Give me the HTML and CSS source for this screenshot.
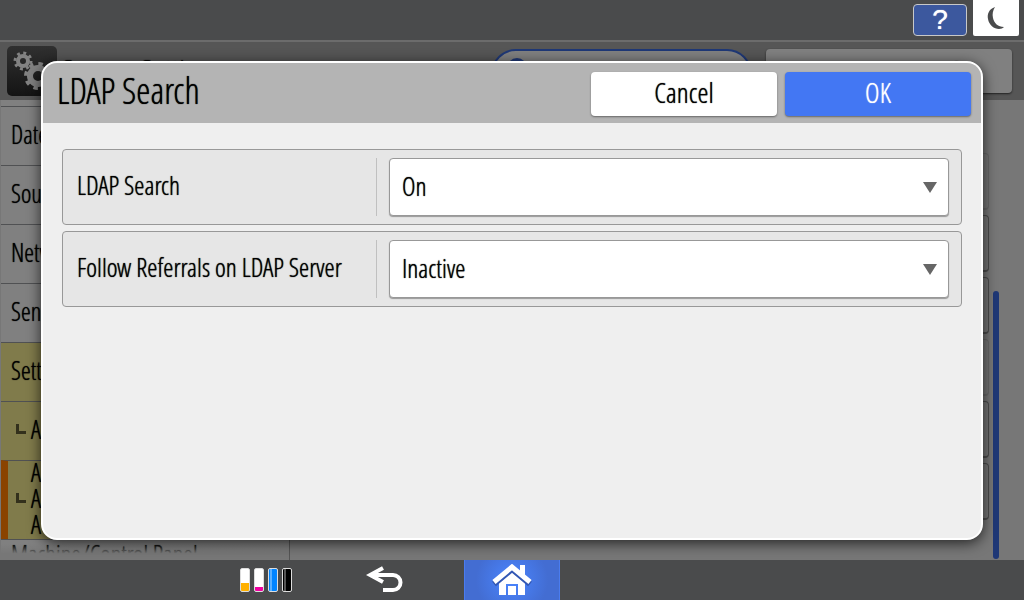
FILE: index.html
```html
<!DOCTYPE html>
<html lang="en">
<head>
    <meta charset="UTF-8">
    <meta name="viewport" content="width=device-width, initial-scale=1.0">
    <title>LDAP Search</title>
    <link rel="stylesheet" href="styles.css">
</head>
<body>
    <header class="topbar">
        <button class="help" type="button" aria-label="Help">?</button>
        <button class="sleep" type="button" aria-label="Sleep">
            <svg width="18" height="24" viewBox="0 0 18 24"><path d="M8 1C2 3 0 8 1 13c1 6 6 10 11 10 2 0 4-1 5-2C11 21 7 17 6 12 5 8 6 4 8 1z" fill="#4a4b4c"/></svg>
        </button>
    </header>

    <!-- Settings screen, dimmed behind the dialog -->
    <div class="screen">
        <div class="screen-head">
            <span class="app-icon">
                <svg width="50" height="50" viewBox="0 0 50 50">
                    <g fill="none" stroke="#828282">
                        <circle cx="16" cy="15" r="5" stroke-width="4"/>
                        <circle cx="16" cy="15" r="8" stroke-width="3" stroke-dasharray="2.900 3.383"/>
                        <circle cx="31" cy="30" r="8" stroke-width="6"/>
                        <circle cx="31" cy="30" r="12" stroke-width="4" stroke-dasharray="4.400 5.025"/>
                    </g>
                </svg>
            </span>
            <h2 class="app-title">System Settings</h2>
            <div class="search">
                <svg width="24" height="24" viewBox="0 0 24 24"><circle cx="11" cy="10" r="8" fill="none" stroke="#1f3876" stroke-width="4"/></svg>
            </div>
            <button class="head-button" type="button">Machine Code Info</button>
        </div>
        <div class="screen-body">
            <nav class="menu">
                <a class="item" href="#">Date</a>
                <a class="item" href="#">Sound</a>
                <a class="item" href="#">Network</a>
                <a class="item" href="#">Send</a>
                <a class="item open" href="#">Settings</a>
                <a class="item open sub" href="#">A</a>
                <a class="item open sub current" href="#">A<br>A<br>A</a>
                <a class="item last" href="#">Machine/Control Panel</a>
            </nav>
            <div class="options">
                <div class="option faint"></div>
                <div class="option"></div>
                <div class="option"></div>
                <div class="option faint"></div>
                <div class="option"></div>
                <div class="option"></div>
            </div>
            <div class="scrollbar"></div>
        </div>
    </div>

    <footer class="navbar">
        <div class="nav-left">
            <div class="toners">
                <span class="toner yellow"></span>
                <span class="toner magenta"></span>
                <span class="toner cyan"></span>
                <span class="toner black"></span>
            </div>
            <button class="back" type="button" aria-label="Back">
                <svg width="37" height="28" viewBox="0 0 37 28"><path d="M4 9h23a7 7 0 0 1 0 15H17M17 2L4 9l13 7" fill="none" stroke="#fff" stroke-width="4"/></svg>
            </button>
        </div>
        <button class="home" type="button" aria-label="Home">
            <svg width="40" height="32" viewBox="0 0 40 32">
                <path d="M28 1h5v14h-5z" fill="#fff"/>
                <path d="M20 8l13 11v12h-7V20H14v11H7V19z" fill="#fff"/>
                <path d="M16 22h8v9h-8z" fill="#fff"/>
                <path d="M2 20L20 5l18 15" fill="none" stroke="#3358b4" stroke-width="6"/>
                <path d="M2 18L20 3l18 15" fill="none" stroke="#fff" stroke-width="5"/>
            </svg>
        </button>
    </footer>

    <form class="dialog" role="dialog" aria-labelledby="dialog-title">
        <div class="dialog-head">
            <h1 id="dialog-title">LDAP Search</h1>
            <button class="btn" type="button">Cancel</button>
            <button class="btn primary" type="submit">OK</button>
        </div>
        <div class="dialog-body">
            <div class="field">
                <label for="ldap">LDAP Search</label>
                <div class="select">
                    <select id="ldap">
                        <option>On</option>
                        <option>Off</option>
                    </select>
                </div>
            </div>
            <div class="field">
                <label for="referrals">Follow Referrals on LDAP Server</label>
                <div class="select">
                    <select id="referrals">
                        <option>Inactive</option>
                        <option>Active</option>
                    </select>
                </div>
            </div>
        </div>
    </form>
</body>
</html>
```
FILE: styles.css
```css
* {
    box-sizing: border-box;
}
body {
    display: flex;
    flex-direction: column;
    height: 100vh;
    margin: 0;
    overflow: hidden;
    background: #4a4b4c;
    color: #000;
    font-family: "Open Sans Condensed Light", "Noto Sans Condensed", "Liberation Sans Narrow", "Liberation Sans", sans-serif;
    font-size: 26px;
    text-shadow: 0 0 1px currentColor;
}
button,
select {
    font: inherit;
    color: inherit;
    text-shadow: inherit;
    border: none;
    padding: 0;
}
h1,
h2 {
    margin: 0;
    font-weight: inherit;
}
svg {
    display: block;
}

/* top bar */
.topbar {
    display: flex;
    justify-content: flex-end;
    align-items: flex-start;
    gap: 6px;
    height: 40px;
    flex: none;
    padding-right: 5px;
}
.help {
    width: 54px;
    height: 32px;
    margin-top: 4px;
    background: #3c589e;
    border: 1px solid #c8c8c8;
    border-radius: 4px;
    color: #fff;
    font-family: "Liberation Sans", sans-serif;
    font-size: 28px;
    line-height: 28px;
}
.sleep {
    display: grid;
    place-items: center;
    width: 46px;
    height: 36px;
    background: #fff;
    border-radius: 0 0 2px 2px;
}

/* dimmed screen */
.screen {
    display: flex;
    flex-direction: column;
    flex: 1;
    min-height: 0;
    background: #777;
}
.screen-head {
    display: flex;
    align-items: flex-start;
    flex: none;
    height: 60px;
    padding: 4px 12px 0 7px;
    border-top: 2px solid #6c6c6c;
    background: #565656;
}
.app-icon {
    width: 50px;
    height: 50px;
    border-radius: 5px;
    background: linear-gradient(#303030, #141414);
}
.app-title {
    flex: 1;
    margin: 8px 0 0 4px;
    font-size: 32px;
    line-height: 32px;
}
.search {
    width: 261px;
    height: 50px;
    margin: 3px 14px 0 0;
    padding: 7px 13px;
    border: 2px solid #1f3876;
    border-radius: 25px;
    background: #808080;
}
.head-button {
    width: 246px;
    height: 44px;
    margin-top: 3px;
    border-radius: 4px;
    background: #808080;
    box-shadow: 0 1px 2px #222;
}
.screen-body {
    display: flex;
    flex: 1;
    min-height: 0;
    overflow: hidden;
}
.menu {
    position: relative;
    width: 289px;
    height: 100%;
    margin-left: 1px;
    padding-top: 6px;
    border-right: 1px solid #555;
    overflow: hidden;
    background: #808080;
}
.menu::after {
    content: "";
    position: absolute;
    inset: auto 0 0;
    height: 16px;
    background: linear-gradient(transparent, #777 60%);
}
.item {
    display: flex;
    align-items: center;
    height: 59px;
    padding: 0 0 4px 10px;
    border-top: 1px solid #505153;
    color: #000;
    font-size: 25px;
    line-height: 26px;
    text-decoration: none;
    white-space: nowrap;
}
.item.open {
    background: #807b4b;
}
.item.sub::before {
    content: "";
    width: 7px;
    height: 7px;
    margin: 0 5px;
    border: solid #33301c;
    border-width: 0 0 3px 3px;
}
.item.current {
    height: 79px;
    padding-left: 3px;
    border-left: 7px solid #8a4300;
}
.item.last {
    height: 32px;
}
.options {
    display: flex;
    flex-direction: column;
    gap: 5px;
    flex: 1;
    padding: 53px 4px 0 8px;
}
.option {
    flex: none;
    height: 57px;
    border: 1px solid #4c4c4c;
    border-bottom-width: 2px;
    border-radius: 4px;
}
.option.faint {
    border-color: #696969;
}
.scrollbar {
    align-self: flex-end;
    width: 6px;
    height: 268px;
    margin: 0 25px 1px 0;
    border-radius: 3px;
    background: #1f3876;
}

/* bottom bar */
.navbar {
    display: grid;
    grid-template-columns: 1fr 96px 1fr;
    flex: none;
    height: 40px;
}
.nav-left {
    display: flex;
    justify-content: flex-end;
    align-items: center;
    gap: 74px;
    padding-right: 61px;
}
.toners {
    display: flex;
    gap: 4px;
}
.toner {
    width: 10px;
    height: 24px;
    border: 1px solid #ddd;
    border-radius: 2px;
}
.yellow {
    background: linear-gradient(#fff 14px, #ffb000 14px);
}
.magenta {
    background: linear-gradient(#fff 18px, #f000a0 18px);
}
.cyan {
    background: linear-gradient(90deg, #0084ff 1px, #5ab0ff 1px 3px, #0084ff 3px);
}
.black {
    background: linear-gradient(90deg, #000 1px, #555 1px 3px, #000 3px);
}
.back {
    background: none;
}
.home {
    display: grid;
    place-items: center;
    background: radial-gradient(circle, #4a85ff, #436dd2 36px);
    border: solid #4a7cf0;
    border-width: 0 1px;
}

/* dialog */
.dialog {
    position: absolute;
    inset: 61px 41px 60px;
    display: flex;
    flex-direction: column;
    border: 2px solid #fff;
    border-radius: 16px;
    overflow: hidden;
    background: #efefef;
    box-shadow: 0 3px 14px rgba(0, 0, 0, 0.7);
}
.dialog-head {
    display: flex;
    align-items: center;
    gap: 8px;
    height: 60px;
    padding: 2px 10px 0 14px;
    background: #b4b4b4;
}
.dialog-head h1 {
    flex: 1;
    padding-bottom: 6px;
    font-size: 36px;
    line-height: 40px;
}
.btn {
    width: 186px;
    height: 44px;
    padding-bottom: 4px;
    border-radius: 4px;
    background: #fff;
    box-shadow: 0 1px 2px #666;
    font-size: 28px;
    line-height: 36px;
}
.btn.primary {
    background: #4377f3;
    color: #fff;
}
.dialog-body {
    display: flex;
    flex-direction: column;
    gap: 6px;
    padding: 26px 19px;
}
.field {
    display: flex;
    height: 76px;
    padding: 8px 12px 8px 14px;
    border: 1px solid #989898;
    border-radius: 4px;
    background: #e6e6e6;
}
.field label {
    display: flex;
    align-items: center;
    width: 300px;
    margin-right: 12px;
    padding-bottom: 4px;
    border-right: 1px solid #c0c0c0;
    white-space: nowrap;
}
.select {
    position: relative;
    flex: 1;
}
.select select {
    appearance: none;
    width: 100%;
    height: 58px;
    padding: 0 12px 2px;
    border: 1px solid #989898;
    border-radius: 4px;
    background: #fff;
    box-shadow: 0 1px 1px #989898;
}
.select::after {
    content: "";
    position: absolute;
    top: 24px;
    right: 12px;
    border: solid transparent;
    border-width: 11px 7px 0;
    border-top-color: #666;
    pointer-events: none;
}
```
